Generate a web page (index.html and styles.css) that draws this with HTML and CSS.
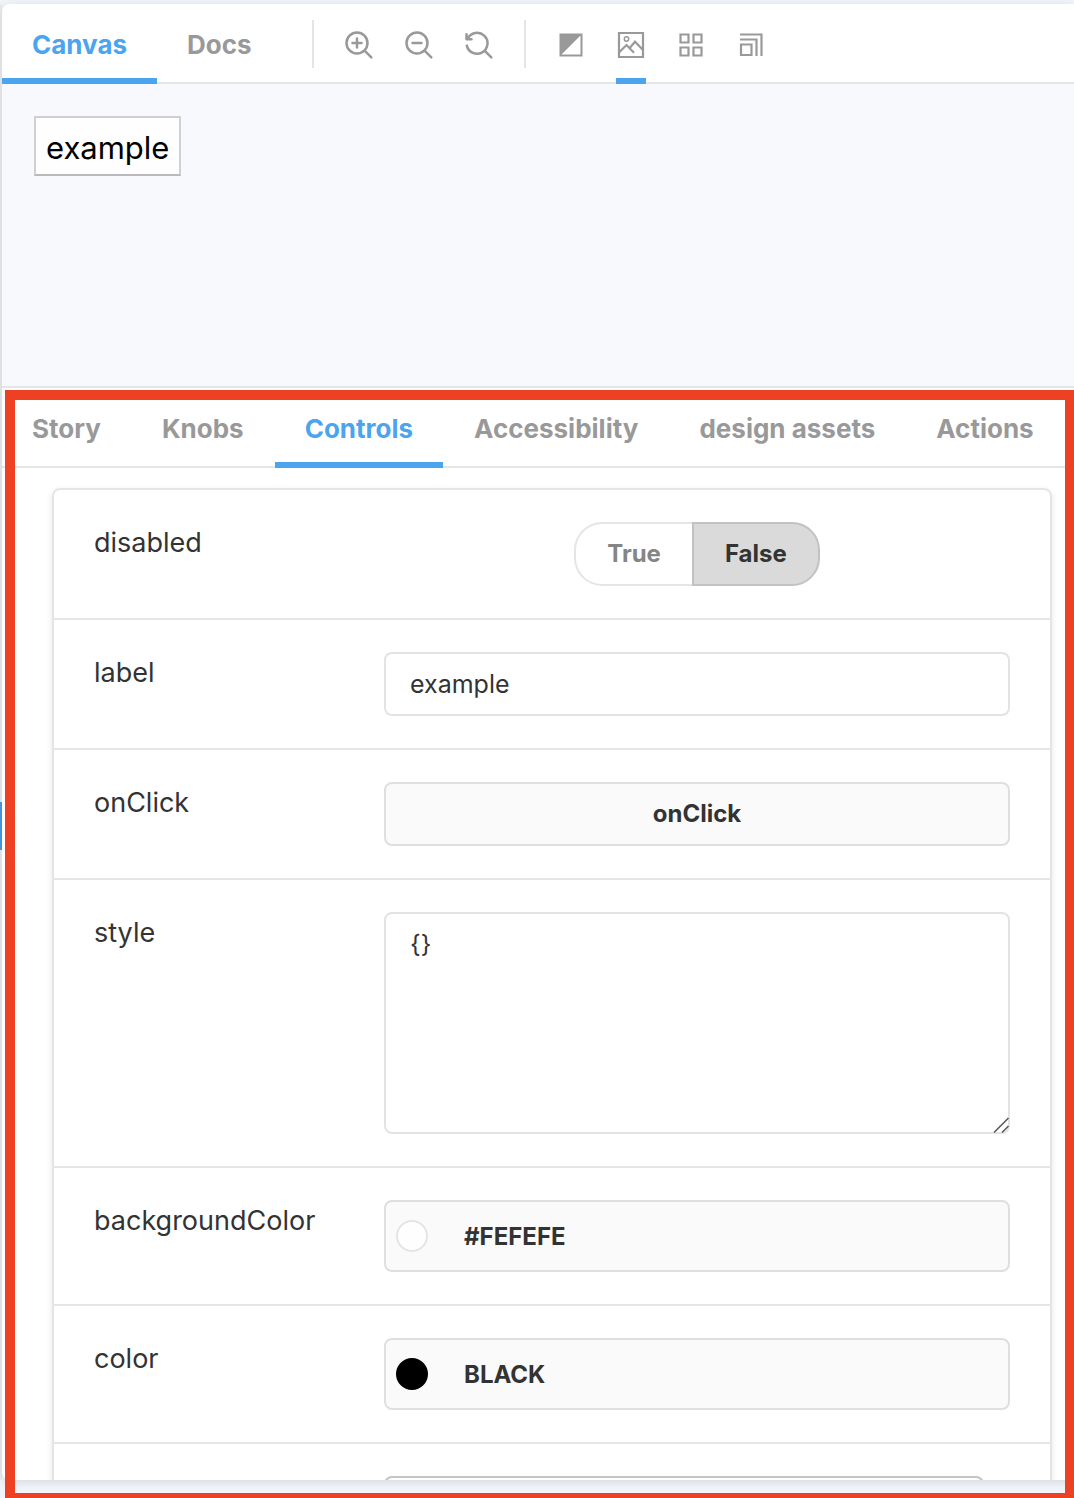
FILE: index.html
```html
<!DOCTYPE html>
<html lang="en">
<head>
<meta charset="utf-8">
<meta name="viewport" content="width=device-width, initial-scale=1">
<title>Button story</title>
<link rel="stylesheet" href="styles.css">
</head>
<body>
<div class="sidebar-edge"><div class="sidebar-marker"></div></div>
<main class="workspace">
  <section class="stage">
    <header class="bar">
      <nav class="tabs">
        <button class="tab tab-active" type="button">Canvas</button>
        <button class="tab" type="button">Docs</button>
      </nav>
      <div class="tools">
        <button class="tool" type="button" aria-label="Zoom in">
          <svg class="icon" viewBox="0 0 28 28"><g fill="none" stroke="currentColor" stroke-width="2.5" stroke-linecap="round"><circle cx="12" cy="12" r="10.5"/><path d="M7.500 12h9M12 7.500v9M19.800 19.800L26.300 26.300"/></g></svg>
        </button>
        <button class="tool" type="button" aria-label="Zoom out">
          <svg class="icon" viewBox="0 0 28 28"><g fill="none" stroke="currentColor" stroke-width="2.5" stroke-linecap="round"><circle cx="12" cy="12" r="10.5"/><path d="M7.500 12h9M19.800 19.800L26.300 26.300"/></g></svg>
        </button>
        <button class="tool" type="button" aria-label="Reset zoom">
          <svg class="icon" viewBox="0 0 28 28"><g fill="none" stroke="currentColor" stroke-width="2.5" stroke-linecap="round" stroke-linejoin="round"><path d="M1.800 14.600A10.500 10.500 0 1 0 2.600 7.600M1.500 3.200v5h5M19.800 19.800L26.300 26.300"/></g></svg>
        </button>
      </div>
      <div class="tools">
        <button class="tool" type="button" aria-label="Contrast">
          <svg class="icon" viewBox="0 0 28 28"><path fill="none" stroke="currentColor" stroke-width="2" d="M3.500 3.500h21v21h-21z"/><path fill="currentColor" d="M3 3h22L3 25z"/></svg>
        </button>
        <button class="tool tool-active" type="button" aria-label="Backgrounds">
          <svg class="icon" viewBox="0 0 28 28"><g fill="none" stroke="currentColor" stroke-width="2.200"><path d="M2 2h24v24H2z"/><path d="M2 21.500l7.500-7.500 7.500 7.800M12.500 17.200L18 10.700l8 8.300"/><circle cx="9.500" cy="8" r="2.200" stroke-width="1.500"/></g></svg>
        </button>
        <button class="tool" type="button" aria-label="Grid">
          <svg class="icon" viewBox="0 0 28 28"><path fill="none" stroke="currentColor" stroke-width="2.200" d="M3.500 3.500h8v8h-8zM16.500 3.500h8v8h-8zM3.500 16.500h8v8h-8zM16.500 16.500h8v8h-8z"/></svg>
        </button>
        <button class="tool" type="button" aria-label="Viewport">
          <svg class="icon" viewBox="0 0 28 28"><path fill="none" stroke="currentColor" stroke-width="2.200" d="M3 3.500h21.500V25M3 8.500h16.500V25M4 13.500h10.500V24H4z"/></svg>
        </button>
      </div>
    </header>
    <div class="preview"><button class="sample" type="button">example</button></div>
  </section>
  <section class="panel">
    <nav class="bar tabs panel-tabs">
      <button class="tab" type="button">Story</button>
      <button class="tab" type="button">Knobs</button>
      <button class="tab tab-active" type="button">Controls</button>
      <button class="tab" type="button">Accessibility</button>
      <button class="tab" type="button">design assets</button>
      <button class="tab" type="button">Actions</button>
    </nav>
    <div class="scroller">
      <form class="card">
        <div class="row">
          <span class="name" id="disabled-name">disabled</span>
          <div class="toggle" role="radiogroup" aria-labelledby="disabled-name">
            <label class="option"><input class="radio" type="radio" name="disabled" value="true">True</label>
            <label class="option"><input class="radio" type="radio" name="disabled" value="false" checked>False</label>
          </div>
        </div>
        <div class="row">
          <label class="name" for="label">label</label>
          <input class="field" id="label" type="text" value="example">
        </div>
        <div class="row">
          <label class="name" for="onclick">onClick</label>
          <button class="field action" id="onclick" type="button">onClick</button>
        </div>
        <div class="row">
          <label class="name" for="style">style</label>
          <div class="area">
            <textarea class="field editor" id="style">{}</textarea>
            <svg class="grip" viewBox="0 0 16 16"><path fill="none" stroke="#555" stroke-width="1.500" d="M1 15.500L15.500 1M9 15.500l6.500-6.500"/></svg>
          </div>
        </div>
        <div class="row">
          <label class="name" for="background">backgroundColor</label>
          <button class="field color" id="background" type="button"><span class="swatch"></span>#FEFEFE</button>
        </div>
        <div class="row">
          <label class="name" for="color">color</label>
          <button class="field color" id="color" type="button"><span class="swatch swatch-black"></span>BLACK</button>
        </div>
        <div class="row">
          <span class="name"></span>
          <input class="field next" type="text" aria-label="Next control">
        </div>
      </form>
    </div>
  </section>
</main>
<div class="highlight"></div>
</body>
</html>
```
FILE: styles.css
```css
* { box-sizing: border-box; }

body {
  position: relative;
  display: flex;
  height: 100vh;
  margin: 0;
  padding: 4px 0 18px;
  overflow: hidden;
  background: #f1f5f9;
  color: #333;
  font-family: Inter, "Liberation Sans", sans-serif;
}

button, input, textarea {
  margin: 0;
  color: inherit;
  font: inherit;
}

.sidebar-edge {
  flex: none;
  width: 2px;
  background: #ececef;
}

.sidebar-marker {
  height: 48px;
  margin-top: 798px;
  background: #4a9be8;
}

.workspace {
  display: flex;
  flex: 1;
  flex-direction: column;
  min-width: 0;
  border-radius: 8px 0 0 8px;
  background: #fff;
  box-shadow: 0 2px 10px rgba(0, 0, 0, 0.12);
}

.bar {
  display: flex;
  flex: none;
  height: 80px;
  box-shadow: inset 0 -2px #e5e5e5;
}

.tabs { display: flex; }

.panel-tabs { gap: 1px; }

.tab {
  padding: 0 30px;
  border: 0;
  background: none;
  color: #999;
  font-size: 26px;
  font-weight: 700;
  white-space: nowrap;
}

.tab-active {
  box-shadow: inset 0 -6px #4ca4ee;
  color: #4ca4ee;
}

.tools {
  display: flex;
  gap: 30px;
  padding-right: 30px;
}

.tools::before {
  width: 2px;
  height: 48px;
  margin-top: 16px;
  background: #e5e5e5;
  content: "";
}

.tabs + .tools { padding-left: 30px; }

.tool {
  display: grid;
  place-items: center;
  width: 30px;
  padding: 2px 0 0;
  border: 0;
  background: none;
  color: #999;
}

.tool-active { box-shadow: inset 0 -6px #4ca4ee; }

.icon {
  width: 28px;
  height: 28px;
}

.preview {
  height: 304px;
  padding: 32px;
  border-bottom: 2px solid #e3e4ec;
  background: #f7f9fd;
}

.sample {
  height: 60px;
  padding: 2px 10px 0;
  border: 2px solid #d0d0d2;
  border-bottom-color: #b9b9b9;
  background: #fefefe;
  color: #000;
  font-size: 31px;
}

.panel {
  display: flex;
  flex: 1;
  flex-direction: column;
  min-height: 0;
}

.scroller {
  flex: 1;
  min-height: 0;
  padding: 20px 22px 0 50px;
  overflow: hidden;
}

.card {
  border: 2px solid #e5e5e5;
  border-radius: 8px;
  box-shadow: 0 2px 6px rgba(0, 0, 0, 0.1);
}

.row {
  display: grid;
  grid-template-columns: 290px 1fr;
  align-items: start;
  padding: 32px 40px;
}

.row + .row { border-top: 2px solid #e5e5e5; }

.name {
  font-size: 27px;
  line-height: 42px;
}

.field {
  width: 100%;
  height: 64px;
  padding: 0 24px;
  border: 2px solid #e3e3e3;
  border-radius: 8px;
  background: #fff;
  font-size: 25px;
}

.action, .color {
  border-color: #dfdfdf;
  background: #fafafa;
  font-size: 24px;
  font-weight: 700;
}

.action { padding-bottom: 2px; }

.toggle {
  display: flex;
  justify-self: center;
}

.option {
  display: flex;
  align-items: center;
  height: 64px;
  padding: 0 31px 2px;
  border: 2px solid #e5e5e5;
  border-right: 0;
  border-radius: 28px 0 0 28px;
  color: #858585;
  font-size: 24px;
  font-weight: 700;
}

.option + .option {
  border-right: 2px solid #e5e5e5;
  border-radius: 0 28px 28px 0;
}

.option:has(:checked) {
  border-color: #c2c2c2;
  background: #dadada;
  color: #333;
}

.radio {
  position: absolute;
  opacity: 0;
}

.area {
  position: relative;
  display: grid;
}

.editor {
  height: 222px;
  padding: 14px 24px;
  line-height: 32px;
  resize: none;
}

.grip {
  position: absolute;
  right: 1px;
  bottom: 1px;
  width: 16px;
  height: 16px;
}

.color {
  display: flex;
  gap: 36px;
  align-items: center;
  height: 72px;
  padding: 0 10px;
}

.swatch {
  width: 32px;
  height: 32px;
  border: 2px solid #e5e5e5;
  border-radius: 50%;
  background: #fefefe;
}

.swatch-black {
  border-color: #000;
  background: #000;
}

.next {
  width: calc(100% - 26px);
  border-color: #c4c4c4;
}

.highlight {
  position: absolute;
  inset: 390px 0 0 5px;
  border: solid #ee4023;
  border-width: 10px 9px 5px 10px;
  pointer-events: none;
}
```
